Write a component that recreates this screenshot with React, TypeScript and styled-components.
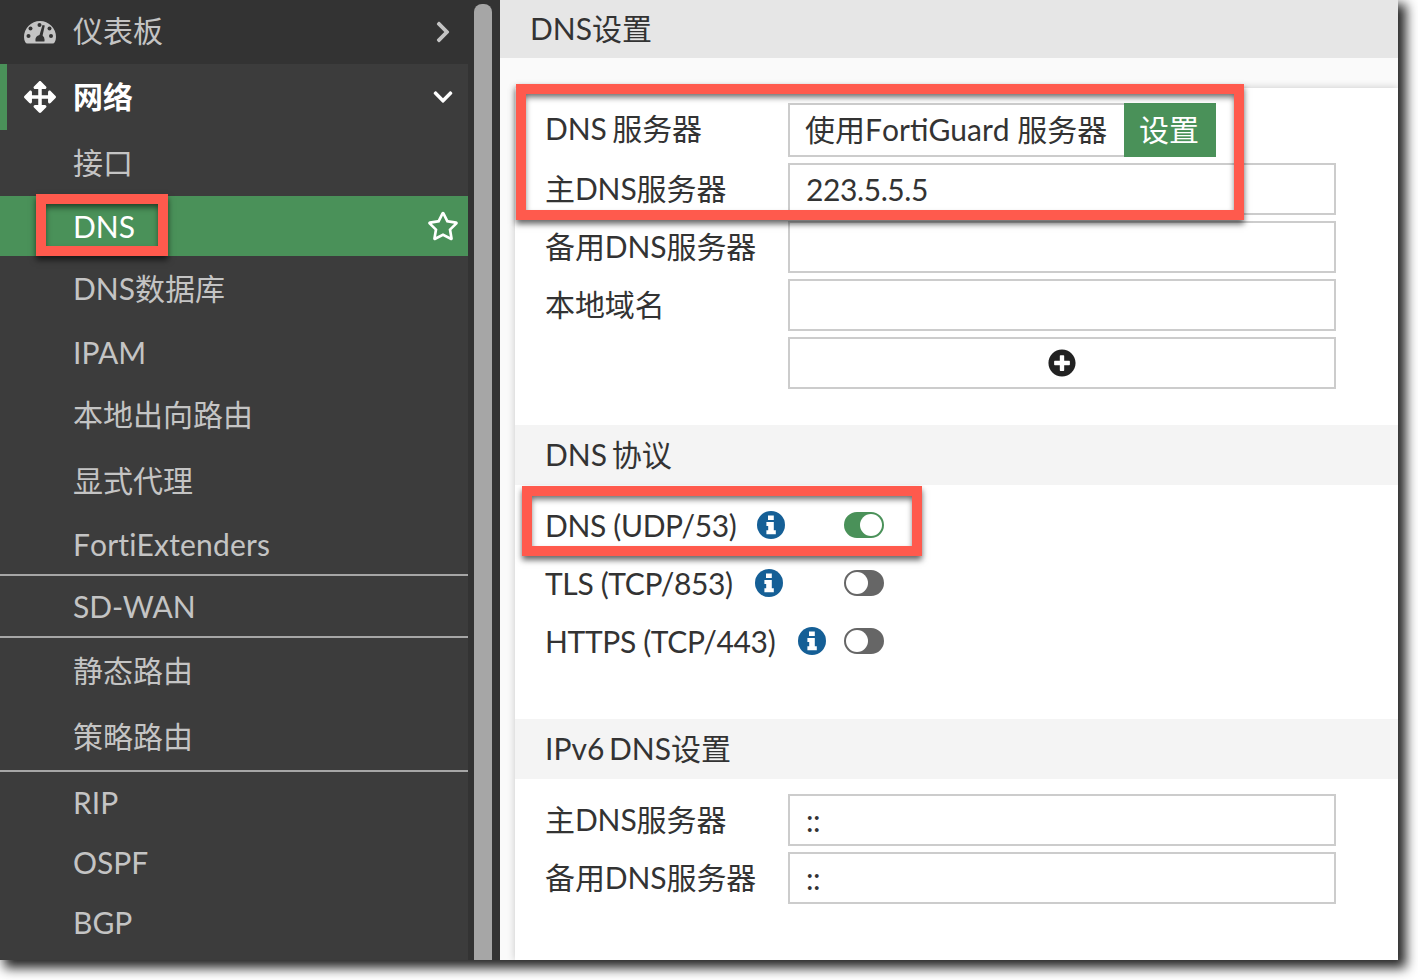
import React from 'react';
import styled, { createGlobalStyle } from 'styled-components';
import {
  FaArrowsAlt,
  FaChevronDown,
  FaChevronRight,
  FaPlusCircle,
  FaRegStar,
} from 'react-icons/fa';

const GlobalStyle = createGlobalStyle`
  html, body {
    margin: 0;
    padding: 0;
    height: 980px;
    background: #ffffff;
  }
  body {
    font-family: Lato, "Noto Sans CJK SC", sans-serif;
  }
`;

type MenuEntry = { label: string; cjk?: boolean; divider?: boolean; loose?: boolean };

const subItemsTop: MenuEntry[] = [
  { label: 'DNS数据库', cjk: true },
  { label: 'IPAM' },
  { label: '本地出向路由', cjk: true },
  { label: '显式代理', cjk: true },
  { label: 'FortiExtenders', divider: true, loose: true },
  { label: 'SD-WAN', divider: true },
  { label: '静态路由', cjk: true },
  { label: '策略路由', cjk: true, divider: true },
  { label: 'RIP' },
  { label: 'OSPF' },
  { label: 'BGP' },
];

const GaugeIcon = () => (
  <svg width="32" height="23" viewBox="0 0 32 23">
    <path
      d="M3.5 22.5 Q1.8 22.5 1.2 21 Q0 18.5 0 16 A16 16 0 0 1 32 16 Q32 18.5 30.8 21 Q30.2 22.5 28.5 22.5 Z"
      fill="#c4c4c4"
    />
    <g fill="#333333">
      <circle cx="15.5" cy="4" r="2" />
      <circle cx="6.5" cy="7.5" r="2" />
      <circle cx="25.5" cy="7.5" r="2" />
      <circle cx="4.5" cy="15" r="2" />
      <circle cx="27" cy="15" r="2" />
      <path d="M18.5 4 L20.8 4.6 L18.6 14.5 Q20.6 16 20.6 19 L20.4 20.5 L11.6 20.5 L11.4 19 Q11.4 15 15.5 14 Z" />
    </g>
  </svg>
);

const InfoGlyph = () => (
  <svg width="28" height="28" viewBox="0 0 28 28">
    <circle cx="14" cy="14" r="14" fill="#155f96" />
    <path
      d="M11 4.5 H16.8 V9 H11 Z M9.4 11 H16.8 V19.2 H18.8 V23.2 H9.4 V19.2 H11.2 V15 H9.4 Z"
      fill="#ffffff"
    />
  </svg>
);

const App = () => {
  return (
    <>
      <GlobalStyle />
      <Window>
        <Sidebar>
          <Menu>
            <TopItem>
              <MenuIcon><GaugeIcon /></MenuIcon>
              <MenuLabel>仪表板</MenuLabel>
              <RightIcon><FaChevronRight size={24} color="#c4c4c4" /></RightIcon>
            </TopItem>
            <OpenItem>
              <MenuIcon><FaArrowsAlt size={32} color="#ffffff" /></MenuIcon>
              <OpenLabel>网络</OpenLabel>
              <RightIcon><FaChevronDown size={22} color="#ffffff" /></RightIcon>
            </OpenItem>
            <SubItem $cjk>接口</SubItem>
            <ActiveItem>
              <span>DNS</span>
              <RightIcon><FaRegStar size={32} color="#ffffff" /></RightIcon>
            </ActiveItem>
            {subItemsTop.map((item) => (
              <SubItem key={item.label} $cjk={item.cjk} $divider={item.divider} $loose={item.loose}>
                {item.label}
              </SubItem>
            ))}
          </Menu>
          <Gutter>
            <Thumb />
          </Gutter>
        </Sidebar>

        <Content>
          <PageTitle>DNS设置</PageTitle>
          <TitleGap />
          <Panel>
            <FormBlock>
              <FormRow>
                <FieldLabel>DNS 服务器</FieldLabel>
                <SelectGroup>
                  <SelectValue>使用FortiGuard 服务器</SelectValue>
                  <SelectButton>设置</SelectButton>
                </SelectGroup>
              </FormRow>
              <FormRow>
                <FieldLabel>主DNS服务器</FieldLabel>
                <TextInput>223.5.5.5</TextInput>
              </FormRow>
              <FormRow>
                <FieldLabel>备用DNS服务器</FieldLabel>
                <TextInput />
              </FormRow>
              <FormRow>
                <FieldLabel>本地域名</FieldLabel>
                <TextInput />
              </FormRow>
              <FormRow>
                <FieldLabel />
                <AddInput><FaPlusCircle size={28} color="#222222" /></AddInput>
              </FormRow>
            </FormBlock>

            <SectionHead>DNS 协议</SectionHead>
            <ProtocolBlock>
              <ProtocolRow>
                <ProtocolName>
                  DNS (UDP/53)
                  <InfoIcon $gap={21}><InfoGlyph /></InfoIcon>
                </ProtocolName>
                <Toggle $on />
              </ProtocolRow>
              <ProtocolRow>
                <ProtocolName>
                  TLS (TCP/853)
                  <InfoIcon $gap={22}><InfoGlyph /></InfoIcon>
                </ProtocolName>
                <Toggle />
              </ProtocolRow>
              <ProtocolRow>
                <ProtocolName>
                  HTTPS (TCP/443)
                  <InfoIcon $gap={23}><InfoGlyph /></InfoIcon>
                </ProtocolName>
                <Toggle />
              </ProtocolRow>
            </ProtocolBlock>

            <SectionHead>IPv6 DNS设置</SectionHead>
            <Ipv6Block>
              <FormRow>
                <FieldLabel>主DNS服务器</FieldLabel>
                <TextInput>::</TextInput>
              </FormRow>
              <FormRow>
                <FieldLabel>备用DNS服务器</FieldLabel>
                <TextInput>::</TextInput>
              </FormRow>
            </Ipv6Block>
          </Panel>
        </Content>

        <Callout $left={36} $top={194} $width={132} $height={62} />
        <Callout $left={516} $top={84} $width={728} $height={136} />
        <Callout $left={522} $top={486} $width={400} $height={70} />
      </Window>
    </>
  );
};

export default App;

const Window = styled.div`
  position: relative;
  display: flex;
  width: 1398px;
  height: 960px;
  background: #ffffff;
  box-shadow: 6px 6px 11px 2px rgba(0, 0, 0, 0.85);
`;

const Sidebar = styled.aside`
  display: flex;
  width: 500px;
  flex: none;
  background: #333333;
`;

const Menu = styled.nav`
  width: 468px;
  flex: none;
  background: #3c3c3c;
  color: #c4c4c4;
  font-size: 30px;
`;

const Gutter = styled.div`
  display: flex;
  flex: 1;
  padding: 4px 8px 0 6px;
`;

const Thumb = styled.div`
  flex: 1;
  background: #a6a6a6;
  border-radius: 8px 8px 0 0;
`;

const TopItem = styled.div`
  display: flex;
  align-items: center;
  height: 64px;
  background: #333333;
`;

const OpenItem = styled.div`
  display: flex;
  align-items: center;
  height: 66px;
  border-left: 7px solid #4a9159;
`;

const MenuIcon = styled.span`
  display: flex;
  justify-content: center;
  width: 32px;
  margin-left: 24px;
  margin-right: 17px;
  ${OpenItem} & {
    margin-left: 17px;
  }
`;

const MenuLabel = styled.span`
  flex: 1;
  padding-bottom: 6px;
`;

const OpenLabel = styled.span`
  flex: 1;
  padding-bottom: 4px;
  color: #ffffff;
  font-weight: 700;
`;

const RightIcon = styled.span`
  display: flex;
  justify-content: center;
  width: 50px;
`;

const SubItem = styled.div<{ $cjk?: boolean; $divider?: boolean; $loose?: boolean }>`
  display: flex;
  align-items: center;
  height: ${(p) => (p.$cjk ? '62px' : '60px')};
  padding-left: 73px;
  ${(p) => p.$cjk && 'padding-bottom: 4px;'}
  ${(p) => p.$divider && 'border-bottom: 2px solid #a6a6a6;'}
  ${(p) => p.$loose && 'font-kerning: none; letter-spacing: 0.15px;'}
`;

const ActiveItem = styled.div`
  display: flex;
  align-items: center;
  justify-content: space-between;
  height: 60px;
  padding-left: 73px;
  background: #4a9159;
  color: #ffffff;
`;

const Content = styled.main`
  flex: 1;
  min-width: 0;
  overflow: hidden;
  background: #fafafa;
  color: #333333;
  font-size: 30px;
`;

const PageTitle = styled.h1`
  display: flex;
  align-items: center;
  box-sizing: border-box;
  height: 58px;
  margin: 0;
  padding: 0 0 4px 30px;
  background: #e6e6e6;
  font-size: 30px;
  font-weight: 400;
`;

const TitleGap = styled.div`
  height: 30px;
`;

const Panel = styled.section`
  height: 872px;
  margin-left: 15px;
  background: #ffffff;
  box-shadow: 0 0 8px rgba(0, 0, 0, 0.2);
`;

const FormBlock = styled.div`
  display: flex;
  flex-direction: column;
  gap: 6px;
  padding: 15px 62px 36px 30px;
`;

const Ipv6Block = styled(FormBlock)`
  padding-top: 15px;
  padding-bottom: 0;
`;

const FormRow = styled.div`
  display: flex;
  align-items: flex-start;
`;

const FieldLabel = styled.label`
  width: 243px;
  flex: none;
  line-height: 50px;
  letter-spacing: -0.1px;
  word-spacing: -2px;
`;

const TextInput = styled.div`
  display: flex;
  align-items: center;
  flex: 1;
  box-sizing: border-box;
  height: 52px;
  padding-left: 16px;
  background: #ffffff;
  border: 2px solid #cccccc;
  letter-spacing: -0.4px;
`;

const AddInput = styled(TextInput)`
  justify-content: center;
  padding-left: 0;
`;

const SelectGroup = styled.div`
  display: flex;
  height: 54px;
`;

const SelectValue = styled.div`
  display: flex;
  align-items: center;
  box-sizing: border-box;
  width: 336px;
  padding: 0 0 4px 15px;
  border: 2px solid #cccccc;
  border-right: none;
  white-space: nowrap;
  font-kerning: none;
`;

const SelectButton = styled.button`
  width: 92px;
  padding: 0 2px 4px 0;
  border: none;
  background: #4a9159;
  color: #ffffff;
  font: inherit;
`;

const SectionHead = styled.h2`
  display: flex;
  align-items: center;
  box-sizing: border-box;
  height: 60px;
  margin: 0;
  padding: 0 0 4px 30px;
  background: #f4f4f4;
  font-size: 30px;
  font-weight: 400;
  word-spacing: -3px;
`;

const ProtocolBlock = styled.div`
  display: flex;
  flex-direction: column;
  height: 234px;
  padding: 11px 0 0 30px;
  box-sizing: border-box;
`;

const ProtocolRow = styled.div`
  display: flex;
  align-items: center;
  height: 58px;
`;

const ProtocolName = styled.span`
  display: flex;
  align-items: center;
  width: 299px;
  white-space: pre;
  letter-spacing: -0.35px;
`;

const InfoIcon = styled.span<{ $gap: number }>`
  display: flex;
  margin-left: ${(p) => p.$gap}px;
`;

const Toggle = styled.span<{ $on?: boolean }>`
  position: relative;
  box-sizing: border-box;
  width: 40px;
  height: 26px;
  border-radius: 13px;
  border: 2px solid ${(p) => (p.$on ? '#4a9159' : '#666666')};
  background: ${(p) => (p.$on ? '#4a9159' : '#666666')};
  &::after {
    content: '';
    position: absolute;
    top: 0;
    ${(p) => (p.$on ? 'right: 0;' : 'left: 0;')}
    width: 22px;
    height: 22px;
    border-radius: 50%;
    background: #ffffff;
  }
`;

const Callout = styled.div<{ $left: number; $top: number; $width: number; $height: number }>`
  position: absolute;
  left: ${(p) => p.$left}px;
  top: ${(p) => p.$top}px;
  box-sizing: border-box;
  width: ${(p) => p.$width}px;
  height: ${(p) => p.$height}px;
  border: 10px solid #ff5a4d;
  box-shadow: 0 4px 6px rgba(0, 0, 0, 0.6), inset 0 4px 6px -1px rgba(0, 0, 0, 0.6);
`;
